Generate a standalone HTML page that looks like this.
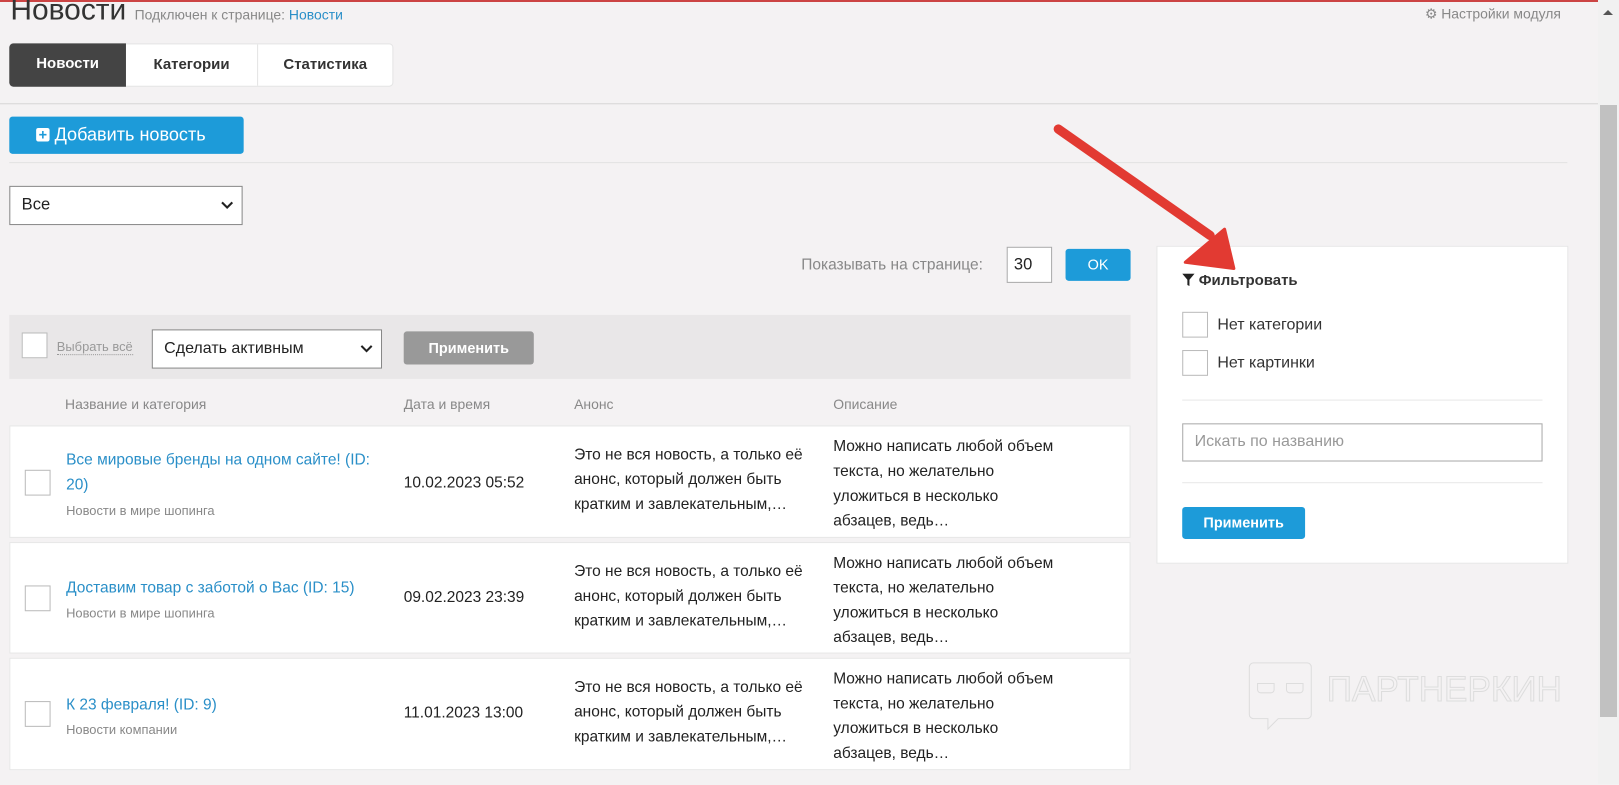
<!DOCTYPE html>
<html><head><meta charset="utf-8"><style>
*{box-sizing:border-box;margin:0;padding:0}
body{width:1619px;height:784px;overflow:hidden;background:#f4f2f3;font-family:"Liberation Sans","DejaVu Sans",sans-serif;color:#222;position:relative}
.a{position:absolute}
#w{position:absolute;left:0;top:0;width:1568px;height:760px;transform:scale(1.0325);transform-origin:0 0}
.blue{color:#2a8fc8}
.cb{position:absolute;width:25px;height:25px;border:1px solid #bbb;background:#fff}
.row{position:absolute;left:9px;width:1086px;background:#fff;border:1px solid #e6e6e6}
.row div{position:absolute;font-size:15px;line-height:24px}
.sel{position:absolute;background:#fff;border:1px solid #888;font-size:16px}
.chev{position:absolute;right:8px;top:50%;margin-top:-4px}
</style></head><body>
<div class="a" style="left:0;top:0;width:1619px;height:2px;background:#c44"></div>
<div id="w">
<div class="a" style="left:10px;top:-6px;font-size:29px;color:#333">Новости <span style="font-size:13.5px;color:#888">Подключен к странице: <span class="blue">Новости</span></span></div>
<div class="a" style="left:1380px;top:6px;font-size:13.5px;color:#888">⚙ Настройки модуля</div>
<div class="a" style="left:9px;top:42px;width:372px;height:42px;background:#fff;border:1px solid #e4e4e4;border-radius:4px;font-size:14.5px;font-weight:bold;color:#333">
<div class="a" style="top:-1px;left:-1px;width:113px;height:42px;background:#444;color:#fff;border-radius:4px 0 0 4px;text-align:center;line-height:41px">Новости</div>
<div class="a" style="left:112px;top:0;width:128px;height:40px;text-align:center;line-height:40px;border-right:1px solid #e4e4e4">Категории</div>
<div class="a" style="left:240px;top:0;width:130px;height:40px;text-align:center;line-height:40px">Статистика</div>
</div>
<div class="a" style="left:0;top:100px;width:1560px;height:1px;background:#d6d6d6"></div>
<div class="a" style="left:9px;top:113px;width:227px;height:36px;background:#1d9bd9;border-radius:3px;color:#fff;font-size:17.5px;line-height:35px;padding-left:26px"><span style="display:inline-block;width:13px;height:13px;background:#fff;border-radius:2px;color:#1d9bd9;font-size:14px;line-height:12px;text-align:center;font-weight:bold;vertical-align:1px">+</span> Добавить новость</div>
<div class="a" style="left:9px;top:157px;width:1509px;height:1px;background:#e2e2e2"></div>
<div class="sel" style="left:9px;top:180px;width:226px;height:38px;padding:9px 11px">Все<svg class="chev" width="12" height="8"><path d="M1 1l5 5 5-5" stroke="#222" stroke-width="2" fill="none"/></svg></div>
<div class="a" style="left:776px;top:248px;font-size:15px;color:#888">Показывать на странице:</div>
<div class="a" style="left:975px;top:239px;width:44px;height:35px;background:#fff;border:1px solid #aaa;font-size:16px;padding:8px 6px">30</div>
<div class="a" style="left:1032px;top:241px;width:63px;height:31px;background:#1d9bd9;border-radius:3px;color:#fff;font-size:14px;text-align:center;line-height:31px">OK</div>
<div class="a" style="left:9px;top:305px;width:1086px;height:62px;background:#e9e7e8"></div>
<div class="cb" style="left:21px;top:322px;height:25px"></div>
<div class="a" style="left:55px;top:329px;font-size:12.5px;color:#999;border-bottom:1px dotted #999;line-height:14px">Выбрать всё</div>
<div class="sel" style="left:147px;top:319px;width:223px;height:38px;padding:9px 11px;font-size:15.5px">Сделать активным<svg class="chev" width="12" height="8"><path d="M1 1l5 5 5-5" stroke="#222" stroke-width="2" fill="none"/></svg></div>
<div class="a" style="left:391px;top:321px;width:126px;height:32px;background:#999;border-radius:3px;color:#fff;font-size:14px;font-weight:bold;text-align:center;line-height:32px">Применить</div>
<div class="a" style="left:63px;top:384px;font-size:13.5px;color:#888">Название и категория</div>
<div class="a" style="left:391px;top:384px;font-size:13.5px;color:#888">Дата и время</div>
<div class="a" style="left:556px;top:384px;font-size:13.5px;color:#888">Анонс</div>
<div class="a" style="left:807px;top:384px;font-size:13.5px;color:#888">Описание</div>

<div class="row" style="top:412px;height:109px">
<span class="cb" style="left:14px;top:42px"></span>
<div class="blue" style="left:54px;top:21px;width:320px">Все мировые бренды на одном сайте! (ID: 20)</div>
<div style="left:54px;top:70px;font-size:12.5px;color:#888">Новости в мире шопинга</div>
<div style="left:381px;top:43px">10.02.2023 05:52</div>
<div style="left:546px;top:16px;width:232px">Это не вся новость, а только её анонс, который должен быть кратким и завлекательным,…</div>
<div style="left:797px;top:8px;width:215px">Можно написать любой объем текста, но желательно уложиться в несколько абзацев, ведь…</div>
</div>
<div class="row" style="top:525px;height:108px">
<span class="cb" style="left:14px;top:41px"></span>
<div class="blue" style="left:54px;top:32px;width:320px">Доставим товар с заботой о Вас (ID: 15)</div>
<div style="left:54px;top:56px;font-size:12.5px;color:#888">Новости в мире шопинга</div>
<div style="left:381px;top:41px">09.02.2023 23:39</div>
<div style="left:546px;top:16px;width:232px">Это не вся новость, а только её анонс, который должен быть кратким и завлекательным,…</div>
<div style="left:797px;top:8px;width:215px">Можно написать любой объем текста, но желательно уложиться в несколько абзацев, ведь…</div>
</div>
<div class="row" style="top:637px;height:109px">
<span class="cb" style="left:14px;top:41px"></span>
<div class="blue" style="left:54px;top:33px;width:320px">К 23 февраля! (ID: 9)</div>
<div style="left:54px;top:57px;font-size:12.5px;color:#888">Новости компании</div>
<div style="left:381px;top:41px">11.01.2023 13:00</div>
<div style="left:546px;top:16px;width:232px">Это не вся новость, а только её анонс, который должен быть кратким и завлекательным,…</div>
<div style="left:797px;top:8px;width:215px">Можно написать любой объем текста, но желательно уложиться в несколько абзацев, ведь…</div>
</div>

<div class="a" style="left:1120px;top:238px;width:399px;height:308px;background:#fff;border:1px solid #e6e6e6">
<div class="a" style="left:24px;top:25px;font-size:14.5px;font-weight:bold;color:#333"><svg width="12" height="12" style="vertical-align:-1px"><path d="M0 0h12L7 6v6L5 11V6z" fill="#222"/></svg> Фильтровать</div>
<span class="cb" style="left:24px;top:63px"></span>
<div class="a" style="left:58px;top:67px;font-size:15.5px;color:#333">Нет категории</div>
<span class="cb" style="left:24px;top:100px"></span>
<div class="a" style="left:58px;top:104px;font-size:15.5px;color:#333">Нет картинки</div>
<div class="a" style="left:24px;top:148px;width:349px;height:1px;background:#e8e8e8"></div>
<div class="a" style="left:24px;top:171px;width:349px;height:37px;border:1px solid #aaa;font-size:15.5px;color:#999;padding:8px 11px">Искать по названию</div>
<div class="a" style="left:24px;top:228px;width:349px;height:1px;background:#e8e8e8"></div>
<div class="a" style="left:24px;top:252px;width:119px;height:31px;background:#1d9bd9;border-radius:3px;color:#fff;font-size:14px;font-weight:bold;text-align:center;line-height:31px">Применить</div>
</div>

<svg class="a" style="left:1000px;top:110px" width="220" height="160"><path d="M25 15L172 118" stroke="#e23a32" stroke-width="9" stroke-linecap="round"/><path d="M148 144L186 112L195 150Z" fill="#e23a32" stroke="#e23a32" stroke-width="3" stroke-linejoin="round"/></svg>

<svg class="a" style="left:1208px;top:640px" width="70" height="70"><path d="M6 2h52a4 4 0 0 1 4 4v46a4 4 0 0 1-4 4H30l-10 10V56H6a4 4 0 0 1-4-4V6a4 4 0 0 1 4-4z" fill="none" stroke="#ddd"/><path d="M10 22h16v6a3 3 0 0 1-3 3H13a3 3 0 0 1-3-3zM38 22h16v6a3 3 0 0 1-3 3H41a3 3 0 0 1-3-3z" fill="none" stroke="#ddd"/></svg>
<div class="a" style="left:1285px;top:649px;font-size:34px;color:transparent;-webkit-text-stroke:1px #ddd;letter-spacing:0px">ПАРТНЕРКИН</div>
</div>

<div class="a" style="left:1598px;top:0;width:21px;height:784px;background:#f1f1f1"></div>
<div class="a" style="left:1603px;top:10px;width:0;height:0;border:5px solid transparent;border-bottom:5px solid #555;border-top:0"></div>
<div class="a" style="left:1600px;top:105px;width:17px;height:612px;background:#c1c1c1"></div>
</body></html>
